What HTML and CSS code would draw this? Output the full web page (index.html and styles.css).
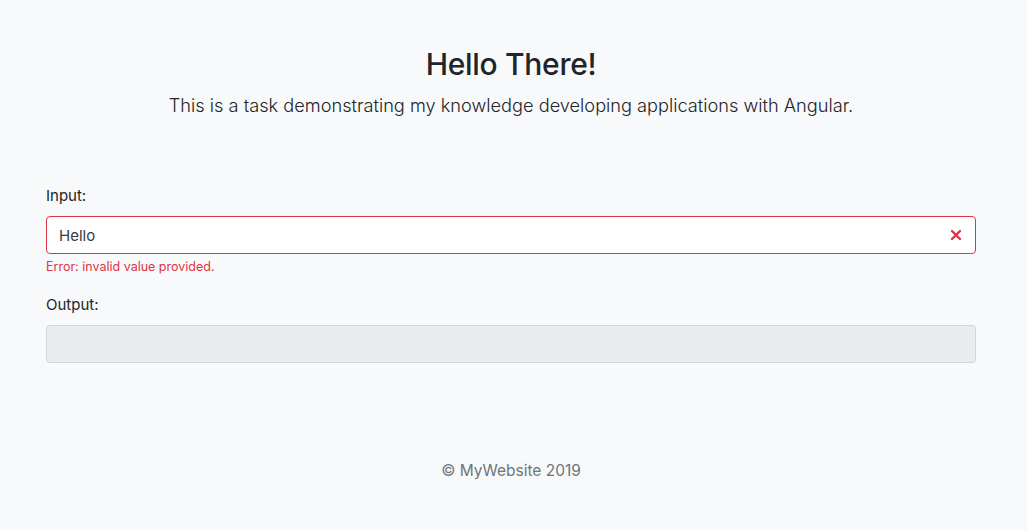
FILE: index.html
```html
<!DOCTYPE html>
<html lang="en">
<head>
<meta charset="utf-8">
<title>Hello There!</title>
<link rel="stylesheet" href="styles.css">
</head>
<body>
<div class="page">
  <header class="hero">
    <h1 class="title">Hello There!</h1>
    <p class="lead">This is a task demonstrating my knowledge developing applications with Angular.</p>
  </header>
  <main class="form">
    <div class="group">
      <label class="label" for="input">Input:</label>
      <div class="field field-invalid">
        <input id="input" class="control" type="text" value="Hello">
        <svg class="x-icon" width="12" height="12" viewBox="0 0 12 12"><path d="M2 2 L10 10 M10 2 L2 10" stroke="#dc3545" stroke-width="2.4" stroke-linecap="round"/></svg>
      </div>
      <div class="feedback">Error: invalid value provided.</div>
    </div>
    <div class="group">
      <label class="label" for="output">Output:</label>
      <div class="field field-disabled"></div>
    </div>
  </main>
  <footer class="footer">© MyWebsite 2019</footer>
</div>
</body>
</html>
```
FILE: styles.css
```css
* { box-sizing: border-box; }
html, body { margin: 0; padding: 0; }
body {
  background: #f8f9fa;
  color: #212529;
  font-family: Inter, "Noto Sans", sans-serif;
  font-size: 16px;
  line-height: 1.5;
}
.page {
  width: 930px;
  margin-left: 46px;
  padding-top: 44px;
}
.hero { text-align: center; }
.title {
  margin: 0;
  font-size: 30px;
  font-weight: 500;
  line-height: 40px;
  letter-spacing: -0.3px;
}
.lead {
  margin: 6px 0 0;
  font-size: 18.2px;
  font-weight: 300;
  line-height: 30px;
}
.form { margin-top: 64px; }
.group { margin-bottom: 17px; }
.label {
  display: block;
  font-size: 15px;
  line-height: 24px;
  margin-bottom: 8px;
}
.field {
  position: relative;
  height: 38px;
  border-radius: 4px;
  border: 1px solid #ced4da;
  background: #fff;
}
.field-invalid { border-color: #dc3545; }
.field-disabled { background: #e9ecef; }
.control {
  width: 100%;
  height: 100%;
  border: 0;
  background: transparent;
  padding: 0 12px;
  font-family: inherit;
  font-size: 15px;
  color: #343a40;
  outline: none;
}
.x-icon {
  position: absolute;
  right: 13px;
  top: 12px;
}
.feedback {
  margin-top: 4px;
  font-size: 12.5px;
  line-height: 18px;
  color: #dc3545;
}
.footer {
  margin-top: 96px;
  text-align: center;
  font-size: 15.5px;
  color: #6c757d;
}
```
